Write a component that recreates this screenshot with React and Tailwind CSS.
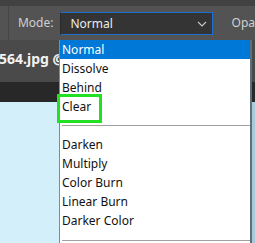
import React from "react";

const modes = ["Normal", "Dissolve", "Behind", "Clear", null, "Darken", "Multiply", "Color Burn", "Linear Burn", "Darker Color", null];

const App = () => {
  return (
    <div
      className="relative w-[255px] h-[243px] overflow-hidden flex flex-col bg-[#d3effa]"
      style={{ fontFamily: '"Noto Sans", "DejaVu Sans", sans-serif' }}
    >
      <div className="h-[6px] bg-[#424242]" />
      <div className="h-[34px] bg-[#535353] flex items-center">
        <div className="ml-[8px] w-px h-full bg-[#454545]" />
        <span className="ml-[9px] text-[12px] text-[#d0d0d0]">Mode:</span>
        <div className="ml-[7px] w-[160px] h-[23px] mt-[1px] bg-[#343434] border border-[#1b6fd0] border-l-[#2a2a2a] flex items-center">
          <span className="ml-[9px] text-[12px] text-[#ececec]">Normal</span>
          <svg className="ml-auto mr-[5px]" width="10" height="6" viewBox="0 0 10 6">
            <polyline points="1,1 5,5 9,1" fill="none" stroke="#c8c8c8" strokeWidth="1.1" />
          </svg>
        </div>
        <span className="ml-[19px] text-[12px] text-[#d0d0d0]">Opa</span>
      </div>
      <div className="h-[42px] bg-[#4a4a4a] flex items-center">
        <span className="-ml-[1px] mt-[-6px] text-[14px] font-bold text-[#f2f2f2]">564.jpg @</span>
      </div>
      <div className="h-[20px] bg-[#282828]" />
      <div className="flex-1 flex justify-end">
        <div className="w-[4px] bg-[#a9cbd8]" />
      </div>

      <div className="absolute left-[59px] top-[40px] w-[193px] bg-white border-l border-r-2 border-l-[#7a8d9a] border-r-[#5f6f7a]">
        {modes.map((m, i) =>
          m === null ? (
            <div key={i} className="h-[19.5px] flex items-center pl-[2px]">
              <div className="w-full h-px bg-[#a0a0a0]" />
            </div>
          ) : (
            <div
              key={i}
              className={
                "h-[19px] flex items-center pl-[2px] text-[12px] " +
                (i === 0 ? "bg-[#0078d7] text-white" : "text-[#111]")
              }
            >
              {m}
            </div>
          )
        )}
      </div>

      <div className="absolute left-[57px] top-[94px] w-[45px] h-[29px] border-[3px] border-[#22e022]" />
    </div>
  );
};

export default App;
